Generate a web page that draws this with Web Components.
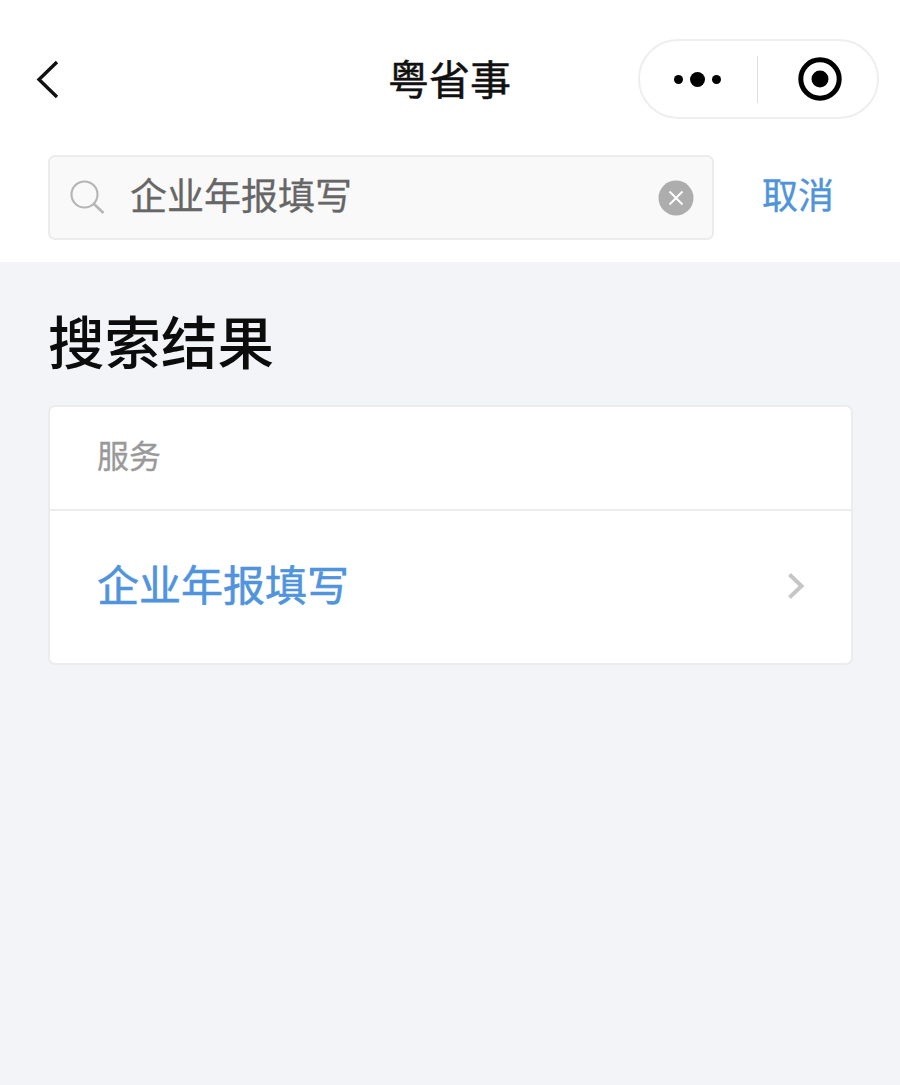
<!DOCTYPE html>
<html lang="zh-CN"><head><meta charset="utf-8">
<style>
html,body{margin:0;padding:0;background:#f3f4f8;}
body{width:900px;height:1085px;overflow:hidden;font-family:"Noto Sans CJK SC","Noto Sans",sans-serif;}
</style></head><body>
<app-page>
  <nav-bar title-text="粤省事"></nav-bar>
  <search-bar value="企业年报填写" action="取消"></search-bar>
  <section-title>搜索结果</section-title>
  <result-card heading="服务">
    <result-row>企业年报填写</result-row>
  </result-card>
</app-page>
<script>
function def(name, html, init){
  customElements.define(name, class extends HTMLElement{
    connectedCallback(){
      if(this.shadowRoot) return;
      const r=this.attachShadow({mode:'open'});
      r.innerHTML=html;
      if(init) init(this,r);
    }
  });
}
def('app-page',`<style>:host{display:block;width:900px;height:1085px;background:#f3f4f8;}</style><slot></slot>`);
def('nav-bar',`<style>
:host{display:block;background:#fff;height:155px;box-sizing:border-box;padding-top:39px;}
.row{display:grid;grid-template-columns:352px 123px 1fr;align-items:center;height:79px;padding:0 21px 0 36px;}
.back{display:block;width:24px;height:40px;}
h1{margin:0;font-size:41px;font-weight:400;-webkit-text-stroke:.5px #111;line-height:75px;height:79px;color:#111;white-space:nowrap;}
.capsule{justify-self:end;box-sizing:border-box;width:241px;height:80px;border:2px solid #eeeeee;border-radius:40px;display:flex;align-items:center;background:#fff;}
.more{flex:0 0 117px;display:flex;justify-content:center;align-items:center;gap:7px;box-sizing:border-box;padding-right:2px;}
.dot{width:9px;height:9px;border-radius:50%;background:#000;}
.dot.big{width:15px;height:15px;}
.sep{width:1px;height:47px;background:#dedede;}
.rec{flex:1;display:flex;justify-content:center;padding-left:4px;box-sizing:border-box;}
svg{display:block;}
</style>
<div class="row">
  <svg class="back" viewBox="0 0 24 40"><path d="M21 3 L3 20.5 L21 38" fill="none" stroke="#111" stroke-width="3.4"/></svg>
  <h1 id="t"></h1>
  <div class="capsule">
    <div class="more"><span class="dot"></span><span class="dot big"></span><span class="dot"></span></div>
    <span class="sep"></span>
    <div class="rec"><svg width="44" height="44" viewBox="0 0 44 44"><circle cx="22" cy="22" r="19.2" fill="none" stroke="#000" stroke-width="5"/><circle cx="22" cy="22" r="8.500" fill="#000"/></svg></div>
  </div>
</div>`,(h,r)=>{r.getElementById('t').textContent=h.getAttribute('title-text');});
def('search-bar',`<style>
:host{display:flex;align-items:flex-start;background:#fff;height:107px;padding:0 0 0 48px;box-sizing:border-box;}
.box{box-sizing:border-box;width:666px;height:85px;background:#f9f9f9;border:2px solid #ececec;border-radius:7px;display:flex;align-items:center;padding:0 18px 0 19px;}
.lens{flex:none;display:block;width:36px;height:36px;margin-top:-1px;}
.val{flex:1;margin-left:25px;font-size:37px;line-height:74px;height:81px;color:#666;-webkit-text-stroke:.3px #666;}
.clear{flex:none;display:block;width:36px;height:36px;}
.act{margin-left:48px;font-size:36px;line-height:77px;color:#4f94d8;-webkit-text-stroke:.4px #4f94d8;}
</style>
<div class="box">
  <svg class="lens" viewBox="0 0 36 36"><circle cx="15.500" cy="15.500" r="13" fill="none" stroke="#b5b5b5" stroke-width="2.1"/><path d="M25 25 L34.500 34" stroke="#b5b5b5" stroke-width="2.6" fill="none"/></svg>
  <span class="val" id="v"></span>
  <svg class="clear" viewBox="0 0 36 36"><circle cx="18" cy="18" r="17.500" fill="#adadad"/><path d="M11.500 11.500 L24.500 24.500 M24.500 11.500 L11.500 24.500" stroke="#fff" stroke-width="2" fill="none"/></svg>
</div>
<span class="act" id="a"></span>`,(h,r)=>{r.getElementById('v').textContent=h.getAttribute('value');r.getElementById('a').textContent=h.getAttribute('action');});
def('section-title',`<style>
:host{display:block;padding:38px 0 0 48px;height:105px;font-size:56.500px;line-height:78px;font-weight:500;color:#0c0c0c;}
</style><slot></slot>`);
def('result-card',`<style>
:host{display:block;box-sizing:border-box;width:805px;margin-left:48px;height:260px;background:#fff;border:2px solid #ececec;border-radius:7px;}
.head{box-sizing:border-box;padding-left:47px;font-size:32px;line-height:94px;color:#999;-webkit-text-stroke:.3px #999;border-bottom:2px solid #ececec;height:104px;}
</style><div class="head" id="h"></div><slot></slot>`,(h,r)=>{r.getElementById('h').textContent=h.getAttribute('heading');});
def('result-row',`<style>
:host{display:flex;align-items:center;justify-content:space-between;height:150px;padding:0 46px 0 47px;font-size:42px;font-weight:400;color:#4f94dc;-webkit-text-stroke:.6px #4f94dc;}
span{display:block;margin-top:-8px;}
svg{display:block;width:18px;height:28px;}
</style><span><slot></slot></span><svg viewBox="0 0 18 28"><path d="M2.500 2.500 L14.500 14 L2.500 25.500" fill="none" stroke="#c6c6c6" stroke-width="4"/></svg>`);
</script>
</body></html>
